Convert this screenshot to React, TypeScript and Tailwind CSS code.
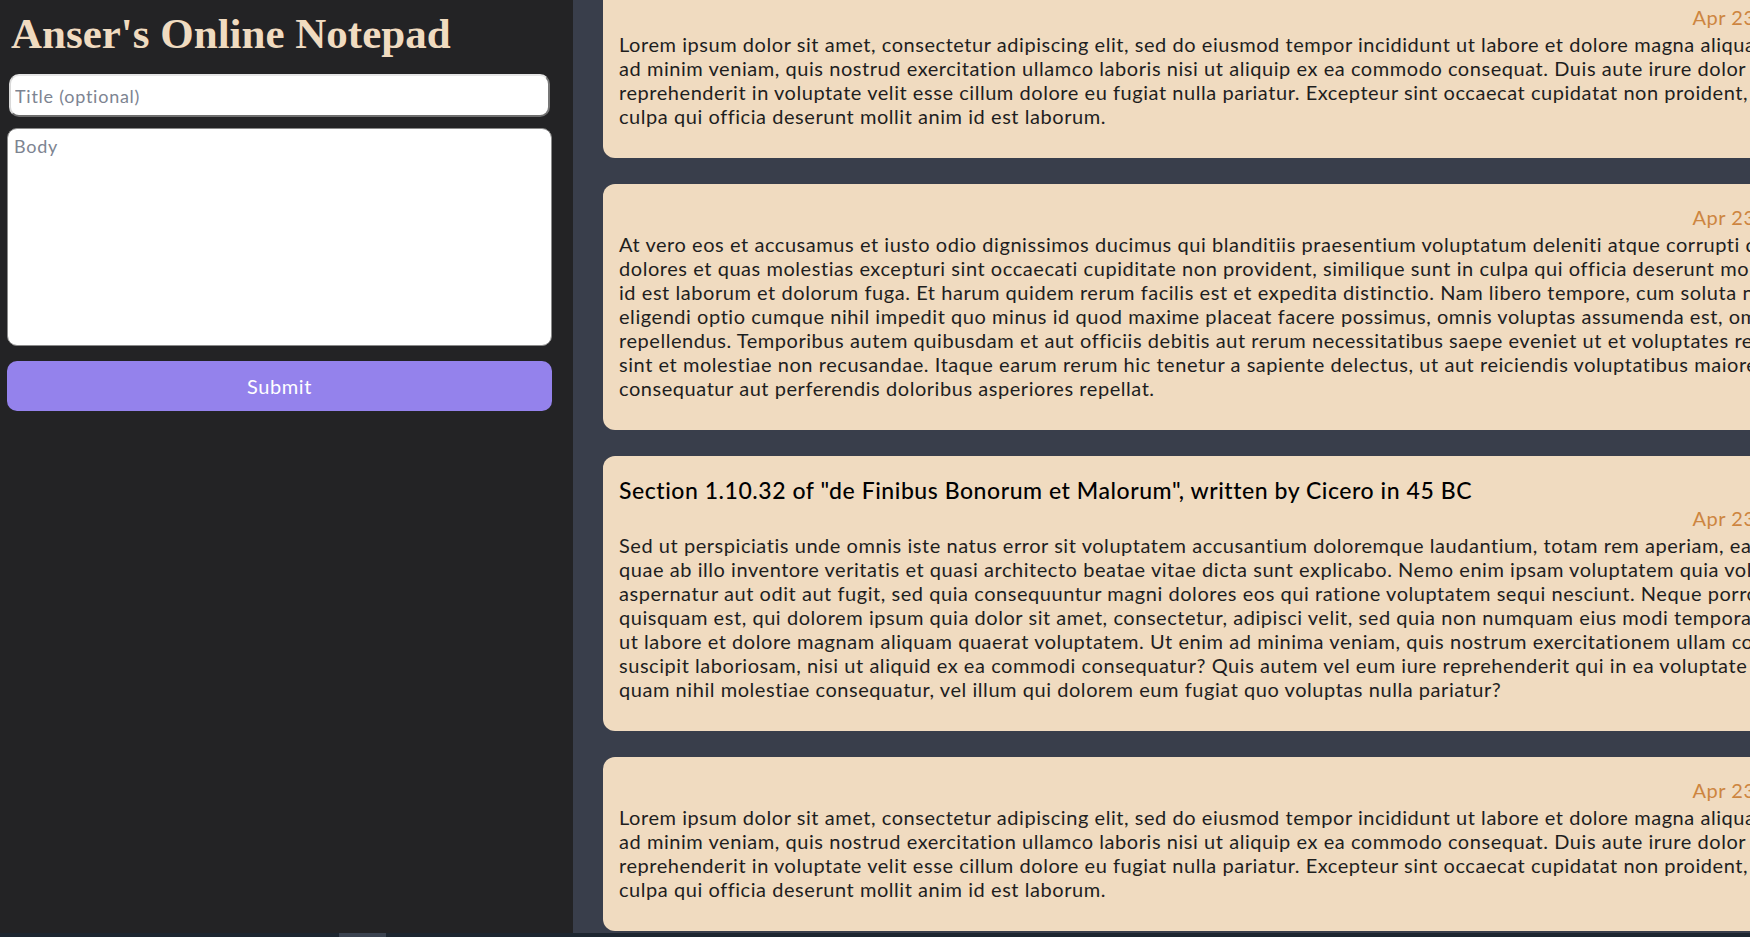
import React from 'react';

type Note = {
  title?: string;
  date: string;
  lines: string[];
};

const LOREM = [
  'Lorem ipsum dolor sit amet, consectetur adipiscing elit, sed do eiusmod tempor incididunt ut labore et dolore magna aliqua. Ut enim',
  'ad minim veniam, quis nostrud exercitation ullamco laboris nisi ut aliquip ex ea commodo consequat. Duis aute irure dolor in',
  'reprehenderit in voluptate velit esse cillum dolore eu fugiat nulla pariatur. Excepteur sint occaecat cupidatat non proident, sunt in',
  'culpa qui officia deserunt mollit anim id est laborum.',
];

const NOTES: Note[] = [
  { date: 'Apr 23, 2023', lines: LOREM },
  {
    date: 'Apr 23, 2023',
    lines: [
      'At vero eos et accusamus et iusto odio dignissimos ducimus qui blanditiis praesentium voluptatum deleniti atque corrupti quos',
      'dolores et quas molestias excepturi sint occaecati cupiditate non provident, similique sunt in culpa qui officia deserunt mollitia animi,',
      'id est laborum et dolorum fuga. Et harum quidem rerum facilis est et expedita distinctio. Nam libero tempore, cum soluta nobis est',
      'eligendi optio cumque nihil impedit quo minus id quod maxime placeat facere possimus, omnis voluptas assumenda est, omnis dolor',
      'repellendus. Temporibus autem quibusdam et aut officiis debitis aut rerum necessitatibus saepe eveniet ut et voluptates repudiandae',
      'sint et molestiae non recusandae. Itaque earum rerum hic tenetur a sapiente delectus, ut aut reiciendis voluptatibus maiores alias',
      'consequatur aut perferendis doloribus asperiores repellat.',
    ],
  },
  {
    title: 'Section 1.10.32 of "de Finibus Bonorum et Malorum", written by Cicero in 45 BC',
    date: 'Apr 23, 2023',
    lines: [
      'Sed ut perspiciatis unde omnis iste natus error sit voluptatem accusantium doloremque laudantium, totam rem aperiam, eaque ipsa',
      'quae ab illo inventore veritatis et quasi architecto beatae vitae dicta sunt explicabo. Nemo enim ipsam voluptatem quia voluptas sit',
      'aspernatur aut odit aut fugit, sed quia consequuntur magni dolores eos qui ratione voluptatem sequi nesciunt. Neque porro',
      'quisquam est, qui dolorem ipsum quia dolor sit amet, consectetur, adipisci velit, sed quia non numquam eius modi tempora incidunt',
      'ut labore et dolore magnam aliquam quaerat voluptatem. Ut enim ad minima veniam, quis nostrum exercitationem ullam corporis',
      'suscipit laboriosam, nisi ut aliquid ex ea commodi consequatur? Quis autem vel eum iure reprehenderit qui in ea voluptate velit esse',
      'quam nihil molestiae consequatur, vel illum qui dolorem eum fugiat quo voluptas nulla pariatur?',
    ],
  },
  { date: 'Apr 23, 2023', lines: LOREM },
];

const NoteCard: React.FC<{ note: Note }> = ({ note }) => (
  <article className="w-[1228px] shrink-0 rounded-xl bg-[#f0dbc0] px-4 pt-5 pb-[30px] text-[#1e1e1e]">
    {note.title ? (
      <h2 className="whitespace-nowrap text-[23px] leading-[29px] font-medium tracking-[0.55px] text-black">
        {note.title}
      </h2>
    ) : null}
    <div className="text-right text-xl leading-[26px] tracking-[0.55px] text-[#cd853f]">{note.date}</div>
    <p className="mt-[2px] text-xl leading-6 tracking-[0.55px]">
      {note.lines.map((line) => (
        <span key={line} className="block whitespace-nowrap">
          {line}
        </span>
      ))}
    </p>
  </article>
);

export default function App() {
  return (
    <div className="relative flex h-[937px] w-full overflow-hidden font-['Lato','Open_Sans',sans-serif]">
      <aside className="flex w-[573px] shrink-0 flex-col bg-[#232325] pr-[21px] pl-[7px]">
        <h1 className="mt-[8px] pl-[4px] font-['Liberation_Serif',serif] text-[43px] leading-[52px] font-bold text-[#f0dbc0]">
          Anser's Online Notepad
        </h1>
        <form className="mt-[14px] flex flex-col" onSubmit={(e) => e.preventDefault()}>
          <input
            type="text"
            placeholder="Title (optional)"
            className="mx-[2px] h-[43px] rounded-[10px] border-2 border-t-[#e6e6e6] border-l-[#d9d9d9] border-r-[#777] border-b-[#6e6e6e] bg-white px-[4px] text-lg tracking-[0.75px] text-[#333] outline-none placeholder:text-[#7d8491]"
          />
          <textarea
            placeholder="Body"
            className="mt-[11px] h-[218px] resize-none rounded-[10px] border border-[#8a8a8a] bg-white px-[6px] py-[3px] text-lg tracking-[0.75px] text-[#333] outline-none placeholder:text-[#7d8491]"
          />
          <button
            type="submit"
            className="mt-[15px] h-[50px] rounded-[10px] bg-[#9482ec] text-xl tracking-[0.6px] text-white"
          >
            Submit
          </button>
        </form>
      </aside>

      <main className="flex min-w-0 flex-1 flex-col overflow-hidden bg-[#393e4b] pl-[30px]">
        <div className="mt-[-16px] flex flex-col gap-[26px]">
          {NOTES.map((note, i) => (
            <NoteCard key={i} note={note} />
          ))}
        </div>
      </main>

      <div className="absolute bottom-0 left-0 h-[4px] w-full bg-[#1d2630]">
        <div className="ml-[339px] h-full w-[47px] bg-[#3b4350]" />
      </div>
    </div>
  );
}
